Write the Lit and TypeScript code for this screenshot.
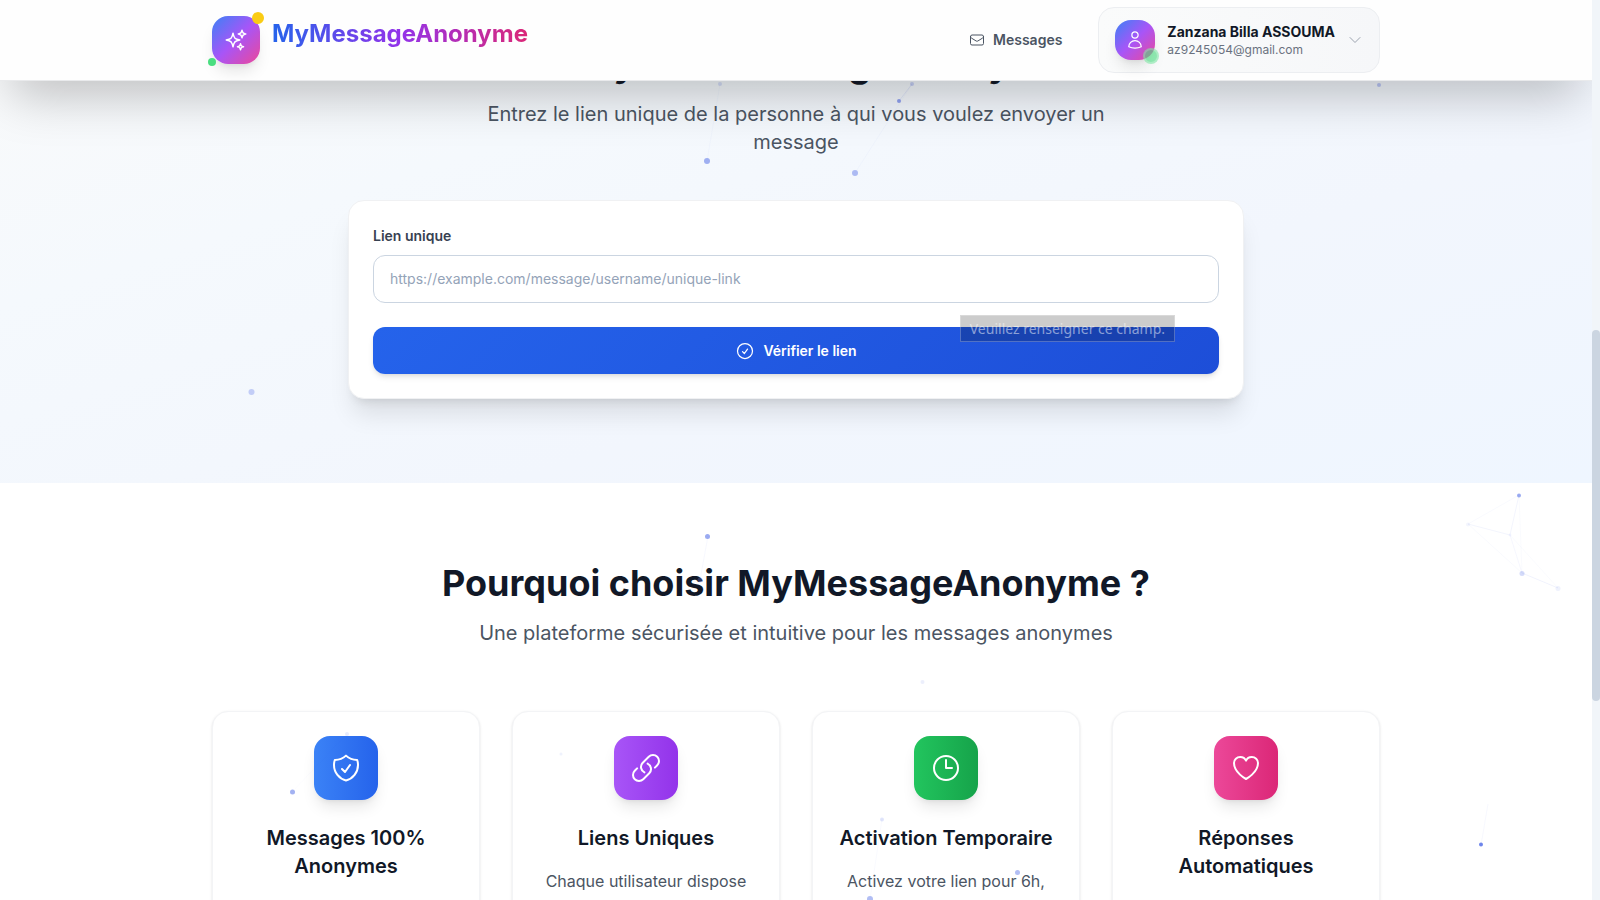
import { LitElement, html, css, svg } from "lit";
import { customElement } from "lit/decorators.js";
import { styleMap } from "lit/directives/style-map.js";

const icon = (size: number, ...paths: string[]) => html`
  <svg width=${size} height=${size} viewBox="0 0 24 24" fill="none" stroke="currentColor"
    stroke-width="1.5" stroke-linecap="round" stroke-linejoin="round" aria-hidden="true">
    ${paths.map((d) => svg`<path d=${d}></path>`)}
  </svg>`;

const SPARKLES = "M9.813 15.904 9 18.75l-.813-2.846a4.5 4.5 0 0 0-3.09-3.09L2.25 12l2.846-.813a4.5 4.5 0 0 0 3.09-3.09L9 5.25l.813 2.846a4.5 4.5 0 0 0 3.09 3.09L15.75 12l-2.846.813a4.5 4.5 0 0 0-3.09 3.09ZM18.259 8.715 18 9.75l-.259-1.035a3.375 3.375 0 0 0-2.455-2.456L14.25 6l1.036-.259a3.375 3.375 0 0 0 2.455-2.456L18 2.25l.259 1.035a3.375 3.375 0 0 0 2.456 2.456L21.75 6l-1.035.259a3.375 3.375 0 0 0-2.456 2.456ZM16.894 20.567 16.5 21.75l-.394-1.183a2.25 2.25 0 0 0-1.423-1.423L13.5 18.75l1.183-.394a2.25 2.25 0 0 0 1.423-1.423l.394-1.183.394 1.183a2.25 2.25 0 0 0 1.423 1.423l1.183.394-1.183.394a2.25 2.25 0 0 0-1.423 1.423Z";
const ENVELOPE = "M21.75 6.75v10.5a2.25 2.25 0 0 1-2.25 2.25h-15a2.25 2.25 0 0 1-2.25-2.25V6.75m19.5 0A2.25 2.25 0 0 0 19.5 4.5h-15a2.25 2.25 0 0 0-2.25 2.25m19.5 0v.243a2.25 2.25 0 0 1-1.07 1.916l-7.5 4.615a2.25 2.25 0 0 1-2.36 0L3.32 8.91a2.25 2.25 0 0 1-1.07-1.916V6.75";
const USER = "M15.75 6a3.75 3.75 0 1 1-7.5 0 3.75 3.75 0 0 1 7.5 0ZM4.501 20.118a7.5 7.5 0 0 1 14.998 0A17.933 17.933 0 0 1 12 21.75c-2.676 0-5.216-.584-7.499-1.632Z";
const CHEVRON = "m19.5 8.25-7.5 7.5-7.5-7.5";
const CHECK_CIRCLE = "M9 12.75 11.25 15 15 9.75M21 12a9 9 0 1 1-18 0 9 9 0 0 1 18 0Z";
const SHIELD = "M9 12.75 11.25 15 15 9.75m-3-7.036A11.959 11.959 0 0 1 3.598 6 11.99 11.99 0 0 0 3 9.749c0 5.592 3.824 10.29 9 11.623 5.176-1.332 9-6.03 9-11.622 0-1.31-.21-2.571-.598-3.751h-.152c-3.196 0-6.1-1.248-8.25-3.285Z";
const LINK = "M13.19 8.688a4.5 4.5 0 0 1 1.242 7.244l-4.5 4.5a4.5 4.5 0 0 1-6.364-6.364l1.757-1.757m13.35-.622 1.757-1.757a4.5 4.5 0 0 0-6.364-6.364l-4.5 4.5a4.5 4.5 0 0 0 1.242 7.244";
const CLOCK = "M12 6v6h4.5m4.5 0a9 9 0 1 1-18 0 9 9 0 0 1 18 0Z";
const HEART = "M21 8.25c0-2.485-2.099-4.5-4.688-4.5-1.935 0-3.597 1.126-4.312 2.733-.715-1.607-2.377-2.733-4.313-2.733C5.1 3.75 3 5.765 3 8.25c0 7.22 9 12 9 12s9-4.78 9-12Z";

const FEATURES = [
  { title: "Messages 100% Anonymes", text: "", path: SHIELD, from: "#3b82f6", to: "#2563eb" },
  { title: "Liens Uniques", text: "Chaque utilisateur dispose", path: LINK, from: "#a855f7", to: "#9333ea" },
  { title: "Activation Temporaire", text: "Activez votre lien pour 6h,", path: CLOCK, from: "#22c55e", to: "#16a34a" },
  { title: "Réponses Automatiques", text: "", path: HEART, from: "#ec4899", to: "#db2777" },
];

// x, y, radius, opacity
const DOTS = [
  [720, 84, 2, 0.2], [707, 161, 3, 0.6], [855, 173, 3, 0.5], [899, 101, 2, 0.7], [912, 84, 2, 0.3],
  [1379, 85, 2, 0.4], [251.5, 392, 3, 0.35], [707.5, 536.5, 2.5, 0.65], [700, 580, 2.5, 0.3], [922.5, 682, 2, 0.12],
  [1519, 495.5, 2, 0.65], [1468, 524.5, 2, 0.08], [1510, 535, 1.5, 0.06], [1522, 573.5, 2.5, 0.28], [1558, 588.5, 2.5, 0.1],
  [347, 734, 2, 0.15], [292.5, 792, 2.5, 0.6], [561, 754, 1.5, 0.1], [882, 819.5, 2, 0.2], [1017.5, 872.5, 2.5, 0.5],
  [870, 899, 3, 0.5], [1481, 844.5, 2, 0.95],
];

// x1, y1, x2, y2, opacity
const LINES = [
  [720, 84, 707, 161, 0.04], [912, 84, 899, 101, 0.12], [912, 84, 855, 173, 0.04], [708, 536, 700, 580, 0.05],
  [1519, 495, 1468, 524, 0.04], [1519, 495, 1510, 535, 0.08], [1519, 495, 1522, 573, 0.03],
  [1468, 524, 1510, 535, 0.08], [1468, 524, 1522, 573, 0.04], [1510, 535, 1522, 573, 0.06],
  [1510, 535, 1558, 588, 0.03], [1522, 573, 1558, 588, 0.09], [347, 734, 292, 792, 0.02],
  [882, 819, 870, 899, 0.04], [1481, 845, 1488, 804, 0.05],
];

const SCROLL = { top: "36.7%", height: "41.2%" };

@customElement("app-root")
export class AppRoot extends LitElement {
  static styles = css`
    :host {
      display: flex;
      height: 100vh;
      overflow: hidden;
      font-family: Inter, "Liberation Sans", sans-serif;
      font-size: 16px;
      color: #111827;
      background: #fff;
    }
    *, *::before, *::after { box-sizing: border-box; }
    h1, h2, h3, p { margin: 0; }
    svg { display: block; flex: none; }
    .page { position: relative; flex: 1; min-width: 0; overflow: hidden; }
    .scrollbar { position: relative; width: 8px; background: #f1f5f9; }
    .thumb { position: absolute; left: 0; right: 0; border-radius: 4px; background: #cbd5e1; }
    .container { max-width: 1200px; margin: 0 auto; padding: 0 16px; }

    .header {
      position: absolute; top: 0; left: 0; right: 0; z-index: 3;
      background: #fefefe;
      border-bottom: 1px solid #e9eaec;
      box-shadow: 0 25px 50px -12px rgba(0, 0, 0, 0.25);
    }
    .bar { display: flex; align-items: center; justify-content: space-between; height: 80px; }
    .brand { display: flex; align-items: center; gap: 12px; color: inherit; text-decoration: none; }
    .mark {
      position: relative; display: grid; place-items: center; width: 48px; height: 48px;
      border-radius: 16px; color: #fff;
      background: linear-gradient(135deg, #3b82f6, #a855f7, #ec4899);
      box-shadow: 0 10px 15px -3px rgba(0, 0, 0, 0.1), 0 4px 6px -4px rgba(0, 0, 0, 0.1);
    }
    .spark { position: absolute; top: -4px; right: -4px; width: 12px; height: 12px; border-radius: 50%; background: #facc15; }
    .pulse { position: absolute; bottom: -2px; left: -4px; width: 8px; height: 8px; border-radius: 50%; background: #4ade80; }
    .name {
      padding-bottom: 12px; font-size: 24px; line-height: 32px; font-weight: 700;
      color: transparent; background: linear-gradient(90deg, #2563eb, #9333ea, #db2777);
      background-clip: text; -webkit-background-clip: text;
    }
    .nav { display: flex; align-items: center; gap: 24px; }
    .navlink {
      display: flex; align-items: center; gap: 8px; padding: 8px 12px;
      font-size: 14px; line-height: 20px; font-weight: 600; color: #4b5563; text-decoration: none;
    }
    .user {
      display: flex; align-items: center; gap: 12px; padding: 12px 16px; font: inherit; text-align: left;
      border: 1px solid #eceef1; border-radius: 16px; cursor: pointer;
      background: linear-gradient(90deg, #fafbfb, #f6f7f9); color: #9ca3af;
    }
    .avatar {
      position: relative; display: grid; place-items: center; width: 40px; height: 40px;
      border-radius: 16px; color: #fff;
      background: linear-gradient(135deg, #3b82f6, #a855f7, #ec4899);
      box-shadow: 0 10px 15px -3px rgba(0, 0, 0, 0.1), 0 4px 6px -4px rgba(0, 0, 0, 0.1);
    }
    .online {
      position: absolute; right: -4px; bottom: -4px; width: 16px; height: 16px; border-radius: 50%;
      border: 2px solid rgba(255, 255, 255, 0.3); background: #4ade80; opacity: 0.6;
    }
    .who { display: flex; flex-direction: column; }
    .fullname { font-size: 14px; line-height: 20px; font-weight: 700; color: #111827; }
    .email { font-size: 12px; line-height: 16px; color: #6b7280; }

    .verify {
      margin-top: -36px; padding: 80px 0 84px;
      background: linear-gradient(to bottom right, #fafafa, #f5f9fd 33%, #f2f6fd 66%, #eff6ff);
    }
    .heading { text-align: center; font-size: 36px; line-height: 40px; font-weight: 700; }
    .lead {
      max-width: 672px; margin: 16px auto 0; text-align: center;
      font-size: 20px; line-height: 28px; color: #4b5563;
    }
    .panel {
      position: relative; max-width: 896px; margin: 44px auto 0; padding: 24px;
      display: flex; flex-direction: column; gap: 24px;
      background: #fff; border: 1px solid #f0f1f3; border-radius: 16px;
      box-shadow: 0 20px 25px -5px rgba(0, 0, 0, 0.1), 0 8px 10px -6px rgba(0, 0, 0, 0.1);
    }
    .field { display: flex; flex-direction: column; gap: 8px; }
    .label { font-size: 14px; line-height: 22px; font-weight: 600; color: #374151; }
    .input {
      width: 100%; height: 48px; padding: 0 16px 2px; border: 1px solid #cbd5e1; border-radius: 12px;
      background: #fff; font: inherit; font-size: 14px; color: #111827; outline: none;
    }
    .input::placeholder { color: #94a3b8; opacity: 1; }
    .submit {
      display: flex; align-items: center; justify-content: center; gap: 8px; width: 100%; height: 47px;
      border: 0; border-radius: 12px; cursor: pointer; color: #fff;
      font: inherit; font-size: 14px; line-height: 20px; font-weight: 600;
      background: linear-gradient(135deg, #2563eb, #1d4ed8);
      box-shadow: 0 4px 6px -1px rgba(0, 0, 0, 0.1), 0 2px 4px -2px rgba(0, 0, 0, 0.1);
    }
    .tip {
      position: absolute; right: 68px; bottom: 56px; padding: 0 9px;
      border: 1px solid rgba(255, 255, 255, 0.25); background: rgba(0, 0, 0, 0.2);
      font-family: "Noto Sans", sans-serif; font-size: 14px; line-height: 25px;
      color: rgba(255, 255, 255, 0.5); white-space: nowrap; pointer-events: none;
    }

    .why { padding: 80px 0; background: #fff; }
    .cards { display: grid; grid-template-columns: repeat(4, 1fr); gap: 32px; margin-top: 64px; }
    .card {
      display: flex; flex-direction: column; align-items: center; min-height: 280px; padding: 24px;
      text-align: center; background: #fff; border: 1px solid #f3f4f6; border-radius: 16px;
      box-shadow: 0 1px 3px rgba(0, 0, 0, 0.1), 0 1px 2px -1px rgba(0, 0, 0, 0.1);
    }
    .tile {
      display: grid; place-items: center; width: 64px; height: 64px; border-radius: 16px; color: #fff;
      box-shadow: 0 10px 15px -3px rgba(0, 0, 0, 0.1), 0 4px 6px -4px rgba(0, 0, 0, 0.1);
    }
    .title { margin-top: 24px; font-size: 20px; line-height: 28px; font-weight: 600; }
    .text { margin-top: 16px; font-size: 16px; line-height: 26px; color: #4b5563; }
    .particles { position: absolute; inset: 0; z-index: 2; pointer-events: none; overflow: hidden; }
  `;

  render() {
    return html`
      <div class="page">
        <header class="header">
          <div class="container bar">
            <a class="brand" href="#">
              <span class="mark">${icon(24, SPARKLES)}<span class="spark"></span><span class="pulse"></span></span>
              <span class="name">MyMessageAnonyme</span>
            </a>
            <nav class="nav">
              <a class="navlink" href="#messages">${icon(16, ENVELOPE)}Messages</a>
              <button class="user" type="button">
                <span class="avatar">${icon(20, USER)}<span class="online"></span></span>
                <span class="who">
                  <span class="fullname">Zanzana Billa ASSOUMA</span>
                  <span class="email">az9245054@gmail.com</span>
                </span>
                ${icon(16, CHEVRON)}
              </button>
            </nav>
          </div>
        </header>

        <main>
          <section class="verify">
            <div class="container">
              <h1 class="heading">Envoyer un message anonyme</h1>
              <p class="lead">Entrez le lien unique de la personne à qui vous voulez envoyer un message</p>
              <form class="panel" @submit=${(e: Event) => e.preventDefault()}>
                <div class="field">
                  <label class="label" for="link">Lien unique</label>
                  <input class="input" id="link" type="url" required
                    placeholder="https://example.com/message/username/unique-link" />
                </div>
                <button class="submit" type="submit">${icon(20, CHECK_CIRCLE)}Vérifier le lien</button>
                <span class="tip" role="tooltip">Veuillez renseigner ce champ.</span>
              </form>
            </div>
          </section>

          <section class="why">
            <div class="container">
              <h2 class="heading">Pourquoi choisir MyMessageAnonyme ?</h2>
              <p class="lead">Une plateforme sécurisée et intuitive pour les messages anonymes</p>
              <div class="cards">
                ${FEATURES.map((f) => html`
                  <article class="card">
                    <span class="tile" style=${styleMap({ background: `linear-gradient(90deg, ${f.from}, ${f.to})` })}>
                      ${icon(32, f.path)}
                    </span>
                    <h3 class="title">${f.title}</h3>
                    ${f.text ? html`<p class="text">${f.text}</p>` : null}
                  </article>`)}
              </div>
            </div>
          </section>
        </main>

        <svg class="particles" width="100%" height="100%" fill="#667eea" stroke="none" aria-hidden="true">
          ${LINES.map(([x1, y1, x2, y2, o]) => svg`<line x1=${x1} y1=${y1} x2=${x2} y2=${y2} stroke="#667eea" stroke-opacity=${o}></line>`)}
          ${DOTS.map(([x, y, r, o]) => svg`<circle cx=${x} cy=${y} r=${r} fill-opacity=${o}></circle>`)}
        </svg>
      </div>
      <div class="scrollbar"><div class="thumb" style=${styleMap(SCROLL)}></div></div>
    `;
  }
}
